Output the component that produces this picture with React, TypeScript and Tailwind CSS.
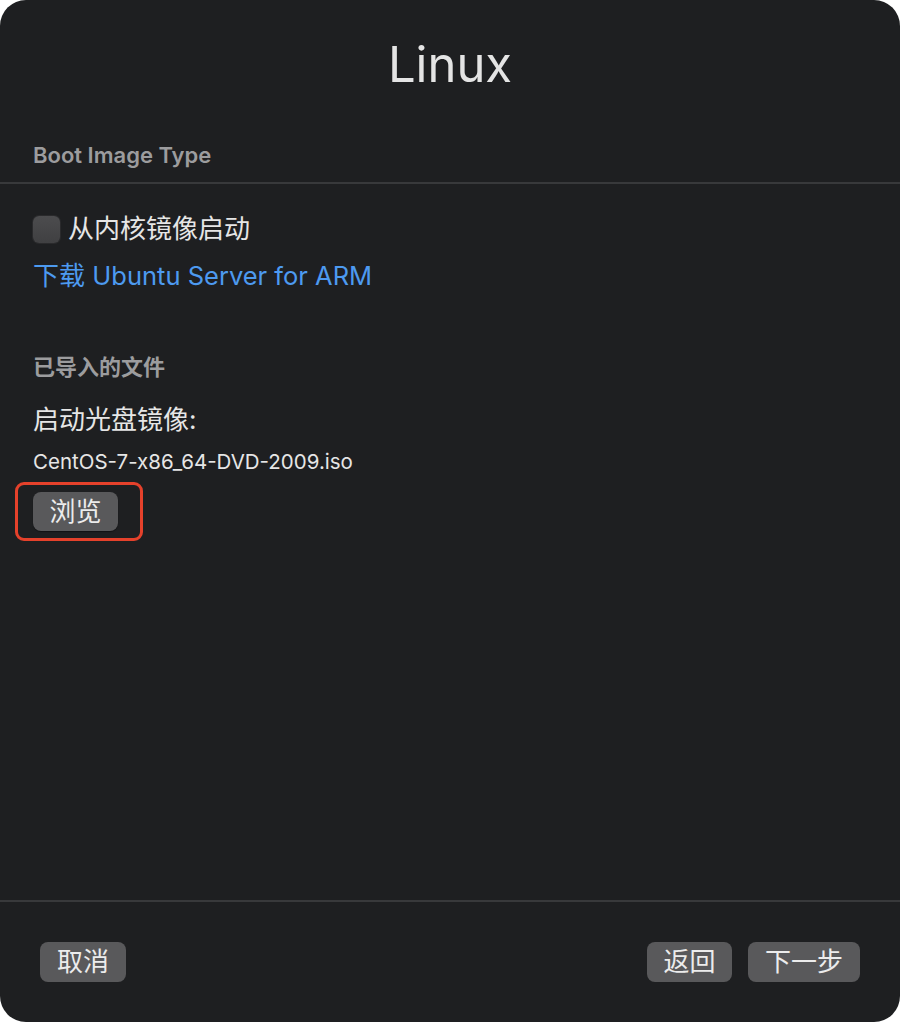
export default function App() {
  const font = { fontFamily: 'Inter, "Noto Sans CJK SC", sans-serif' };
  return (
    <div className="bg-white w-[900px] h-[1022px]" style={font}>
      <div className="bg-[#1e1f21] w-[900px] h-[1022px] rounded-[26px] flex flex-col overflow-hidden">
        <div className="h-[130px] flex items-start justify-center pt-[34px]">
          <h1 className="text-[49px] leading-[62px] text-[#e4e4e4] font-normal">Linux</h1>
        </div>
        <div className="px-[33px] h-[52px]">
          <div className="text-[22px] leading-[50px] font-semibold text-[#9c9c9e]">Boot Image Type</div>
        </div>
        <div className="h-[2px] bg-[#38393b]" />
        <div className="px-[33px] pt-[30px] flex flex-col flex-1">
          <label className="flex items-center gap-[8px] h-[30px]">
            <span className="w-[27px] h-[27px] rounded-[6px] bg-gradient-to-b from-[#4c4c4e] to-[#404042] shadow-[0_0_0_1px_#2a2a2c]" />
            <span className="text-[26px] text-[#e6e6e6] leading-[30px]">从内核镜像启动</span>
          </label>
          <div className="mt-[17px] text-[26px] leading-[30px] text-[#4d9af0]">
            下载 <span className="text-[25.5px]">Ubuntu Server for ARM</span>
          </div>
          <div className="mt-[62px] text-[22px] leading-[28px] font-semibold text-[#9c9c9e]">已导入的文件</div>
          <div className="mt-[24px] text-[26px] leading-[30px] text-[#e6e6e6]">启动光盘镜像:</div>
          <div className="mt-[15px] text-[20.5px] leading-[24px] text-[#e6e6e6]">CentOS-7-x86_64-DVD-2009.iso</div>
          <div className="mt-[8px] ml-[-18px] w-[128px] h-[59px] border-[3px] border-[#e5412b] rounded-[9px] flex items-center pl-[15px]">
            <button className="w-[85px] h-[39px] rounded-[8px] bg-[#59595b] text-[26px] text-[#ececec] leading-[39px] shadow-[0_1px_1px_rgba(0,0,0,0.4)]">浏览</button>
          </div>
          <div className="flex-1" />
        </div>
        <div className="h-[2px] bg-[#38393b]" />
        <div className="h-[120px] flex items-start pt-[40px] px-[40px]">
          <button className="w-[86px] h-[40px] rounded-[8px] bg-[#59595b] text-[26px] text-[#ececec] leading-[40px]">取消</button>
          <div className="flex-1" />
          <button className="w-[85px] h-[40px] rounded-[8px] bg-[#59595b] text-[26px] text-[#ececec] leading-[40px]">返回</button>
          <button className="ml-[16px] w-[112px] h-[40px] rounded-[8px] bg-[#59595b] text-[26px] text-[#ececec] leading-[40px]">下一步</button>
        </div>
      </div>
    </div>
  );
}
